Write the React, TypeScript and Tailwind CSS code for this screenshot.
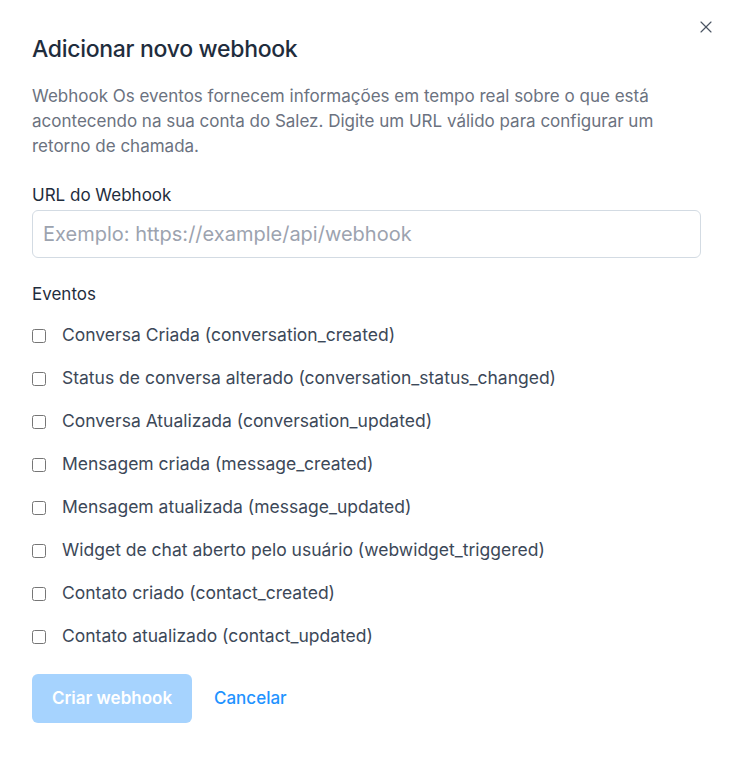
import { X } from 'lucide-react';

const events = [
  'Conversa Criada (conversation_created)',
  'Status de conversa alterado (conversation_status_changed)',
  'Conversa Atualizada (conversation_updated)',
  'Mensagem criada (message_created)',
  'Mensagem atualizada (message_updated)',
  'Widget de chat aberto pelo usuário (webwidget_triggered)',
  'Contato criado (contact_created)',
  'Contato atualizado (contact_updated)',
];

export default function App() {
  return (
    <div className="min-h-screen bg-white font-['Inter',sans-serif] text-[#3c4858]">
      <div className="relative px-8 pt-[34px] pb-10">
        <button className="absolute right-[17px] top-[17px] text-[#4b5563]">
          <X className="w-[20px] h-[20px]" strokeWidth={1.4} />
        </button>

        <h2 className="text-[23px] font-medium text-[#1f2d3d] leading-[30px] tracking-[-0.3px]">
          Adicionar novo webhook
        </h2>
        <p className="mt-[20px] text-[17px] leading-[25px] text-[#6b7280] pr-4">
          Webhook Os eventos fornecem informações em tempo real sobre o que está acontecendo na sua conta do Salez. Digite um URL válido para configurar um retorno de chamada.
        </p>

        <label className="block mt-[24px] text-[17px] leading-[24px] text-[#1f2d3d]">URL do Webhook</label>
        <input
          type="text"
          placeholder="Exemplo: https://example/api/webhook"
          className="mt-[3px] w-full h-12 rounded-md border border-[#d3dbe3] px-[10px] text-[20px] placeholder:text-[#9ca3af] outline-none"
        />

        <div className="mt-[24px] text-[17px] leading-[24px] text-[#1f2d3d]">Eventos</div>

        <div className="mt-[8px] flex flex-col">
          {events.map((e) => (
            <label key={e} className="flex items-center h-[43px]">
              <input type="checkbox" className="w-[14px] h-[14px] m-0 mr-4" />
              <span className="text-[17.5px] text-[#3c4858]">{e}</span>
            </label>
          ))}
        </div>

        <div className="mt-[16px] flex items-center gap-[22px]">
          <button className="h-[49px] w-[160px] rounded-md bg-[#a6d3fe] text-white font-semibold text-[17px]">
            Criar webhook
          </button>
          <button className="text-[#1f93ff] text-[17px] font-medium">Cancelar</button>
        </div>
      </div>
    </div>
  );
}
